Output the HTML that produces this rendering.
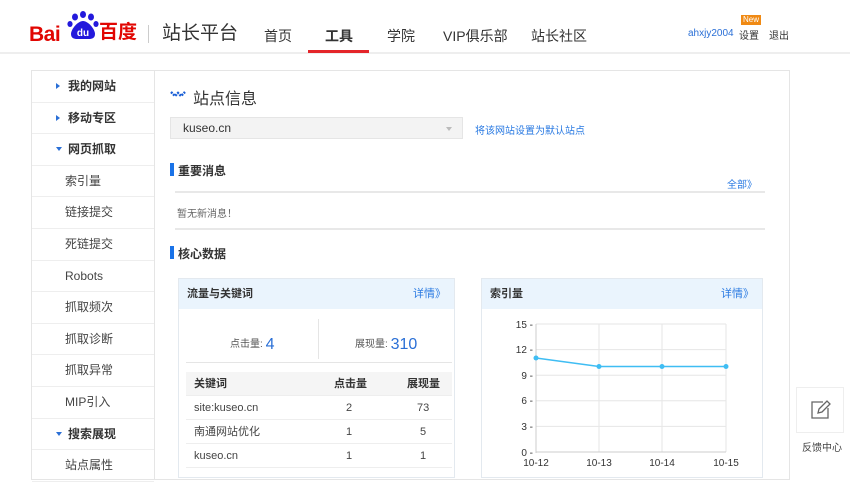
<!DOCTYPE html>
<html><head><meta charset="utf-8"><style>
*{margin:0;padding:0;box-sizing:border-box}
body{width:850px;height:469px;overflow:hidden;background:#fff;font-family:"Liberation Sans","Noto Sans CJK SC",sans-serif;color:#333;position:relative}
.a{position:absolute;white-space:nowrap}
.hdr{position:absolute;left:0;top:0;width:850px;height:54px;border-bottom:2px solid #eee}
.nav{font-size:14px;color:#333;top:26px}
.sb{position:absolute;left:31px;top:70px;width:124px;height:410px;border:1px solid #e5e5e5;background:#fff}
.sb div{height:31.6px;border-bottom:1px solid #eee;font-size:12px;line-height:31px;padding-left:33px;color:#444}
.sb div.g{padding-left:24px;font-weight:bold;color:#333}
.sb div.g:before{content:"";display:inline-block;border:3px solid transparent;border-left:4px solid #2a6fd6;margin-right:5px;vertical-align:1px}
.sb div.g.o:before{border:3px solid transparent;border-top:4px solid #2a6fd6;margin-right:6px;vertical-align:-1px}
.main{position:absolute;left:155px;top:70px;width:635px;height:410px;border:1px solid #e5e5e5;border-left:none}
.sec{font-size:12px;font-weight:bold;color:#333}
.bar{position:absolute;width:4px;height:13px;background:#1a73e8}
.line{position:absolute;height:2px;background:#e8e8e8}
.pn{position:absolute;border:1px solid #e3e9ef;top:278px;height:200px;background:#fff}
.ph{height:30px;background:#eaf4fd;font-size:11px;font-weight:bold;line-height:30px;padding-left:8px;color:#333;position:relative}
.ph span{position:absolute;right:8px;color:#2a7ae2;font-weight:normal}
.tr{position:absolute;left:7px;width:266px;height:24px;border-bottom:1px solid #eee;font-size:11px;line-height:24px;color:#444}
.tr span{position:absolute}
.blue{color:#2a7ae2}
.lg{line-height:1}
</style></head><body>
<div class="hdr"></div>
<!-- logo -->
<div class="a lg" style="left:29px;top:24px;font-size:21px;font-weight:bold;color:#e10602;letter-spacing:-0.5px">Bai</div>
<svg class="a" style="left:66px;top:10px" width="34" height="34" viewBox="0 0 34 34">
<ellipse cx="9" cy="7" rx="3" ry="3.5" fill="#2319dc"/><ellipse cx="17" cy="4.5" rx="3" ry="3.5" fill="#2319dc"/><ellipse cx="25" cy="7" rx="3" ry="3.5" fill="#2319dc"/><ellipse cx="4" cy="14" rx="2.6" ry="3" fill="#2319dc"/><ellipse cx="30" cy="14" rx="2.6" ry="3" fill="#2319dc"/>
<path d="M17 11c-5 0-12 8-12 13 0 4 3 5 6 5h12c3 0 6-1 6-5 0-5-7-13-12-13z" fill="#2319dc"/>
<text x="17" y="26" font-family="Liberation Sans" font-size="10" font-weight="bold" fill="#fff" text-anchor="middle">du</text>
</svg>
<div class="a lg" style="left:99px;top:23px;font-size:19px;font-weight:bold;color:#e10602">百度</div>
<div class="a" style="left:148px;top:25px;width:1px;height:18px;background:#ccc"></div>
<div class="a lg" style="left:162px;top:24px;font-size:19px;color:#333">站长平台</div>
<div class="a nav" style="left:264px">首页</div>
<div class="a nav" style="left:325px;font-weight:bold">工具</div>
<div class="a" style="left:308px;top:50px;width:61px;height:3px;background:#e4252a"></div>
<div class="a nav" style="left:387px">学院</div>
<div class="a nav" style="left:443px">VIP俱乐部</div>
<div class="a nav" style="left:531px">站长社区</div>
<div class="a" style="left:688px;top:28px;font-size:10px;color:#2a6fd6">ahxjy2004</div>
<div class="a" style="left:739px;top:27px;font-size:10px;color:#333">设置</div>
<div class="a" style="left:741px;top:15px;width:20px;height:10px;background:#f08a14;color:#fff;font-size:8px;line-height:10px;text-align:center">New</div>
<div class="a" style="left:769px;top:27px;font-size:10px;color:#333">退出</div>
<!-- sidebar -->
<div class="sb">
<div class="g">我的网站</div><div class="g">移动专区</div><div class="g o">网页抓取</div>
<div>索引量</div><div>链接提交</div><div>死链提交</div><div>Robots</div><div>抓取频次</div><div>抓取诊断</div><div>抓取异常</div><div>MIP引入</div>
<div class="g o">搜索展现</div><div>站点属性</div>
</div>
<!-- main -->
<div class="main"></div>
<svg class="a" style="left:170px;top:90px" width="16" height="10"><path d="M1 2l4 4 3-3 3 3 4-4" stroke="#1a5fd6" stroke-width="2.4" stroke-dasharray="2 1" fill="none"/></svg>
<div class="a" style="left:193px;top:85px;font-size:16px;color:#333">站点信息</div>
<div class="a" style="left:170px;top:117px;width:293px;height:22px;background:#f3f3f3;border:1px solid #e5e5e5;font-size:12px;line-height:20px;padding-left:12px;color:#333">kuseo.cn</div>
<div class="a" style="left:446px;top:127px;border:3px solid transparent;border-top:4px solid #bbb"></div>
<div class="a blue" style="left:475px;top:122px;font-size:10px">将该网站设置为默认站点</div>
<div class="bar" style="left:170px;top:163px"></div>
<div class="a sec" style="left:178px;top:162px">重要消息</div>
<div class="a blue" style="left:727px;top:176px;font-size:10px">全部》</div>
<div class="line" style="left:175px;top:191px;width:590px"></div>
<div class="a" style="left:177px;top:205px;font-size:10px;color:#666">暂无新消息！</div>
<div class="line" style="left:175px;top:228px;width:590px"></div>
<div class="bar" style="left:170px;top:246px"></div>
<div class="a sec" style="left:178px;top:245px">核心数据</div>
<!-- left panel -->
<div class="pn" style="left:178px;width:277px">
<div class="ph">流量与关键词<span>详情》</span></div>
<div class="a" style="left:51px;top:56px;font-size:10px;color:#555">点击量: <span style="font-size:16px;color:#2a6fd6;vertical-align:-2px">4</span></div>
<div class="a" style="left:139px;top:40px;width:1px;height:40px;background:#e5e5e5"></div>
<div class="a" style="left:176px;top:56px;font-size:10px;color:#555">展现量: <span style="font-size:16px;color:#2a6fd6;vertical-align:-2px">310</span></div>
<div class="a" style="left:7px;top:83px;width:266px;height:1px;background:#e5e5e5"></div>
<div class="tr" style="top:93px;background:#f5f5f5;font-weight:bold;color:#333"><span style="left:8px">关键词</span><span style="left:148px">点击量</span><span style="left:221px">展现量</span></div>
<div class="tr" style="top:117px"><span style="left:8px">site:kuseo.cn</span><span style="left:160px">2</span><span style="left:231px">73</span></div>
<div class="tr" style="top:141px"><span style="left:8px">南通网站优化</span><span style="left:160px">1</span><span style="left:234px">5</span></div>
<div class="tr" style="top:165px"><span style="left:8px">kuseo.cn</span><span style="left:160px">1</span><span style="left:234px">1</span></div>
</div>
<!-- right panel -->
<div class="pn" style="left:481px;width:282px">
<div class="ph">索引量<span>详情》</span></div>
</div>
<svg class="a" style="left:481px;top:308px" width="282" height="161" font-family="Liberation Sans" font-size="10" fill="#333">
<g stroke="#e6e6e6" stroke-width="1">
<line x1="55" y1="16" x2="245" y2="16"/><line x1="55" y1="41.6" x2="245" y2="41.6"/><line x1="55" y1="67.2" x2="245" y2="67.2"/><line x1="55" y1="92.8" x2="245" y2="92.8"/><line x1="55" y1="118.4" x2="245" y2="118.4"/>
<line x1="118" y1="16" x2="118" y2="144"/><line x1="181" y1="16" x2="181" y2="144"/><line x1="245" y1="16" x2="245" y2="144"/>
</g>
<line x1="55" y1="16" x2="55" y2="145" stroke="#ccc"/><line x1="55" y1="144" x2="245" y2="144" stroke="#ccc"/>
<g text-anchor="end"><text x="52" y="20">15 -</text><text x="52" y="45">12 -</text><text x="52" y="71">9 -</text><text x="52" y="96">6 -</text><text x="52" y="122">3 -</text><text x="52" y="148">0 -</text></g>
<g text-anchor="middle"><text x="55" y="158">10-12</text><text x="118" y="158">10-13</text><text x="181" y="158">10-14</text><text x="245" y="158">10-15</text></g>
<polyline points="55,50 118,58.5 181,58.5 245,58.5" fill="none" stroke="#3fbdf3" stroke-width="1.5"/>
<g fill="#3fbdf3"><circle cx="55" cy="50" r="2.5"/><circle cx="118" cy="58.5" r="2.5"/><circle cx="181" cy="58.5" r="2.5"/><circle cx="245" cy="58.5" r="2.5"/></g>
</svg>
<!-- feedback -->
<div class="a" style="left:796px;top:387px;width:48px;height:46px;border:1px solid #eee;background:#fff"></div>
<svg class="a" style="left:809px;top:399px" width="24" height="22"><path d="M14 3H3v16h16V9" fill="none" stroke="#666" stroke-width="1.3"/><path d="M9 14l1-4 8-8 3 3-8 8z" fill="none" stroke="#666" stroke-width="1.3"/></svg>
<div class="a" style="left:802px;top:439px;font-size:10px;color:#444">反馈中心</div>
</body></html>
